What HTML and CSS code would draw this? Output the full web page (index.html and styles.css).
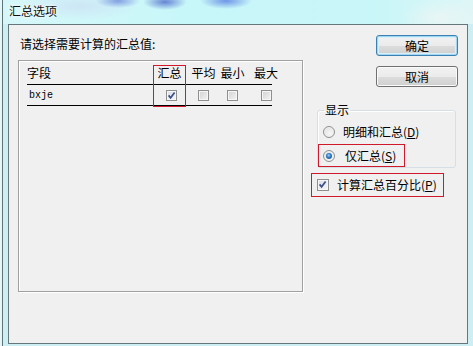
FILE: index.html
```html
<!DOCTYPE html>
<html lang="zh">
<head>
<meta charset="utf-8">
<title>汇总选项</title>
<link rel="stylesheet" href="styles.css">
</head>
<body>
<div class="window">
  <div class="titlebar"><span class="title">汇总选项</span></div>
  <div class="client">
    <div class="left">
      <div class="prompt">请选择需要计算的汇总值:</div>
      <div class="panel">
        <div class="grid">
          <div class="row head">
            <span class="c-field">字段</span>
            <span class="cell w2">汇总</span>
            <span class="cell w3">平均</span>
            <span class="cell w4">最小</span>
            <span class="cell w5">最大</span>
          </div>
          <div class="row data">
            <span class="c-field mono">bxje</span>
            <span class="cell w2"><span class="cb on"><svg viewBox="0 0 11 11" width="11" height="11"><path d="M2.6 5.4 L4.6 7.8 L8.6 2.4" fill="none" stroke="#3a4f8c" stroke-width="1.7"/></svg></span></span>
            <span class="cell w3"><span class="cb"></span></span>
            <span class="cell w4"><span class="cb"></span></span>
            <span class="cell w5"><span class="cb"></span></span>
          </div>
          <div class="mark mark-col"></div>
        </div>
      </div>
    </div>
    <div class="right">
      <button class="btn default">确定</button>
      <button class="btn second">取消</button>
      <fieldset class="group">
        <legend>显示</legend>
        <div class="opt first"><span class="radio"></span><span class="lbl">明细和汇总(<u>D</u>)</span></div>
        <div class="opt marked sel"><span class="radio on"></span><span class="lbl">仅汇总(<u>S</u>)</span></div>
      </fieldset>
      <div class="opt marked pct"><span class="cb on"><svg viewBox="0 0 11 11" width="11" height="11"><path d="M2.6 5.4 L4.6 7.8 L8.6 2.4" fill="none" stroke="#3a4f8c" stroke-width="1.7"/></svg></span><span class="lbl">计算汇总百分比(<u>P</u>)</span></div>
    </div>
  </div>
</div>
</body>
</html>
```

FILE: styles.css
```css
* { box-sizing: border-box; }
html, body { margin: 0; padding: 0; }
body {
  width: 473px;
  height: 346px;
  overflow: hidden;
  font-family: "Noto Sans CJK SC", "Noto Sans", sans-serif;
  font-size: 12px;
  line-height: 14px;
  color: #000;
}
.window {
  width: 473px;
  height: 346px;
  background:
    linear-gradient(to right, #e6f6f8 0 2px, #5f7477 2px 3px, transparent 3px),
    #cdeff3;
}
.titlebar {
  height: 24px;
  padding: 4px 0 0 9px;
  background:
    radial-gradient(ellipse 22px 7px at 118px 1px, rgba(125,155,225,0.95), rgba(125,155,225,0) 100%),
    radial-gradient(ellipse 22px 8px at 165px 2px, rgba(95,125,210,0.95), rgba(95,125,210,0) 100%),
    radial-gradient(ellipse 26px 8px at 226px 1px, rgba(105,145,230,0.95), rgba(105,145,230,0) 100%),
    radial-gradient(ellipse 60px 14px at 80px 6px, rgba(205,228,245,0.9), rgba(205,228,245,0) 100%),
    radial-gradient(ellipse 40px 18px at 440px 18px, rgba(235,245,245,0.9), rgba(235,245,245,0) 100%),
    linear-gradient(to right, #e2f8fa 0 2px, #5f7477 2px 3px, #d6f7f9 3px, #c8f7f9 40%, #c9f6f8 80%, #dff6f6 100%);
}
.title {
  color: #111;
  text-shadow: 0 0 6px #fff, 0 0 3px #fff;
}
.client {
  margin-left: 8px;
  width: 460px;
  height: 320px;
  border: 1px solid #64787b;
  background: #f0f0f0;
  display: flex;
}
.left {
  width: 294px;
  padding: 12px 0 0 9px;
}
.prompt {
  margin-left: 2px;
}
.panel {
  margin-top: 9px;
  width: 285px;
  height: 232px;
  border: 1px solid #a0a0a0;
  box-shadow: 1px 1px 0 #fff, inset 1px 1px 0 #fff;
}
.grid {
  position: relative;
  margin-left: 8px;
  width: 245px;
}
.row {
  display: flex;
  border-bottom: 1px solid #000;
}
.row.head {
  height: 24px;
  padding-top: 5px;
}
.row.data {
  height: 21px;
  align-items: center;
}
.c-field {
  width: 126px;
  flex: none;
}
.mono {
  font-family: "Liberation Mono", monospace;
  font-size: 10px;
  padding-left: 2px;
  padding-top: 2px;
}
.cell {
  flex: none;
  display: flex;
  justify-content: center;
  white-space: nowrap;
}
.w2 { width: 33px; }
.w3 { width: 35px; }
.w4 { width: 23px; }
.w5 { width: 44px; }
.data .w2 { padding-left: 3px; }
.cb {
  display: inline-block;
  width: 11px;
  height: 11px;
  flex: none;
  border: 1px solid #8e8f8f;
  box-shadow: inset 0 0 0 1px #f6f6f6;
  background: linear-gradient(135deg, #d2d2d2, #f4f4f4);
  position: relative;
}
.cb svg {
  position: absolute;
  left: -1px;
  top: -1px;
}
.cb.on {
  background: linear-gradient(135deg, #dcdde6, #f6f6f8);
}
.mark {
  position: absolute;
  border: 1px solid #d01a2c;
  pointer-events: none;
}
.mark-col {
  left: 126px;
  top: 4px;
  width: 33px;
  height: 42px;
}
.right {
  margin-left: 8px;
  padding: 10px 9px 0 0;
  flex: 1;
  display: flex;
  flex-direction: column;
  align-items: flex-start;
}
.btn {
  align-self: flex-end;
  width: 82px;
  height: 21px;
  padding: 0;
  font: inherit;
  color: #000;
  border: 1px solid #707070;
  border-radius: 3px;
  background: linear-gradient(#f2f2f2 0%, #ebebeb 50%, #dddddd 50%, #cfcfcf 100%);
  box-shadow: inset 0 0 0 1px #fbfbfb;
}
.btn.default {
  border-color: #3c7fb1;
  box-shadow: inset 0 0 0 1px #9fd6f2, inset 0 0 0 2px #d8eef8;
}
.btn.second {
  margin-top: 10px;
}
.group {
  margin: 16px 0 0 6px;
  width: 139px;
  padding: 4px 0 0 0;
  border: 1px solid #d5dfe5;
  border-radius: 3px;
  box-shadow: inset 1px 1px 0 #fff;
}
.group legend {
  margin-left: 6px;
  padding: 0 1px;
  line-height: 14px;
}
.opt {
  display: flex;
  align-items: center;
  white-space: nowrap;
}
.opt.first {
  height: 22px;
  padding-left: 5px;
}
.opt .lbl {
  margin-left: 8px;
}
.opt .lbl u {
  text-underline-offset: 1px;
}
.opt.marked {
  border: 1px solid #d01a2c;
}
.opt.sel {
  margin-top: 1px;
  width: 87px;
  height: 23px;
  padding-left: 4px;
}
.opt.sel .lbl {
  margin-left: 10px;
}
.opt.pct {
  margin-top: 5px;
  width: 133px;
  height: 24px;
  padding-left: 5px;
}
.opt.pct .cb {
  width: 12px;
  height: 12px;
}
.radio {
  flex: none;
  width: 12px;
  height: 12px;
  border-radius: 50%;
  border: 1px solid #8e8f8f;
  background: radial-gradient(circle at 60% 65%, #f7f7f7 0%, #dcdcdc 100%);
  box-shadow: inset 0 0 0 1px #f2f2f2;
  position: relative;
}
.radio.on::after {
  content: "";
  position: absolute;
  left: 2px;
  top: 2px;
  width: 6px;
  height: 6px;
  border-radius: 50%;
  background: radial-gradient(circle at 45% 40%, #9ed3f5 0%, #2b78c0 45%, #174a86 100%);
}
```
